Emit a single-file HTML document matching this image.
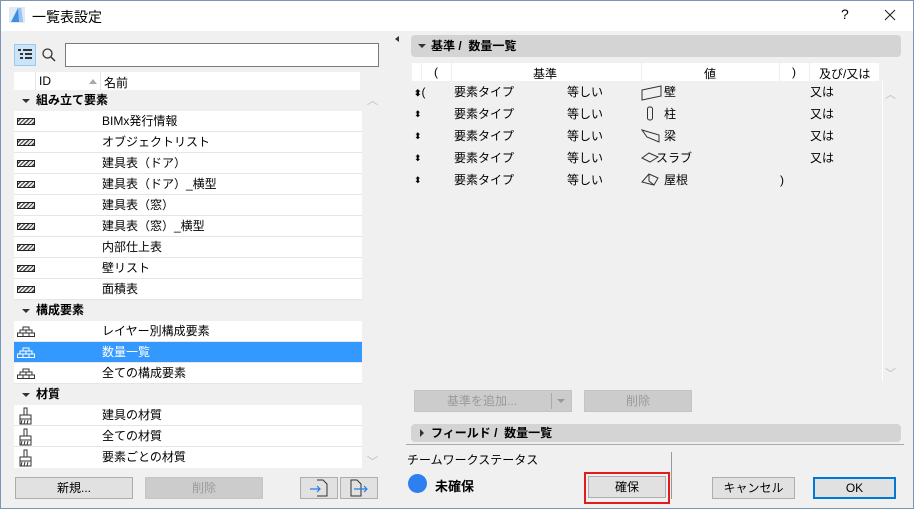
<!DOCTYPE html>
<html><head><meta charset="utf-8"><style>
*{box-sizing:border-box;margin:0;padding:0}
body{width:914px;height:509px;overflow:hidden;background:#f0f0f0;font-family:"Liberation Sans","Noto Sans CJK JP",sans-serif;font-size:12px;color:#000;position:relative}
.a{position:absolute}
.win{left:0;top:0;width:914px;height:509px;border:1px solid #7a96b4}
.title{left:1px;top:1px;width:912px;height:30px;background:#fff}
.row{position:absolute;left:14px;width:348px;height:21px;line-height:21px;background:#fff;border-bottom:1px solid #e6e6e6}
.grp{background:#f0f0f0;font-weight:bold;border-bottom:none}
.grp span{position:absolute;left:22px}
.grp i{position:absolute;left:8px;top:9px;border:4px solid transparent;border-top:4px solid #333;border-bottom:0}
.row .n{position:absolute;left:88px}
.hatch{position:absolute;left:3px;top:7px;width:18px;height:7px;border:1px solid #222;background:repeating-linear-gradient(135deg,#eee 0 1px,#444 1px 2.2px,#eee 2.2px 3px)}
.sel{background:#3399ff;color:#fff}
.btn{position:absolute;height:22px;border:1px solid #adadad;background:#e1e1e1;text-align:center;line-height:20px}
.dis{color:#9a9a9a;background:#cccccc;border-color:#c4c4c4}
.bar{position:absolute;left:411px;width:490px;background:#d4d4d4;border-radius:4px;font-weight:bold}
.tr{position:absolute;left:412px;height:22px;line-height:22px;width:470px}
.tr span{position:absolute}
.ar{font-size:9px}
</style></head><body>
<div class="a win"></div>
<div class="a title"></div>
<svg class="a" style="left:9px;top:7px" width="16" height="16"><rect width="16" height="16" fill="#dfe9f7"/><path d="M2 15 L9 1 L12 1 L14 15 Z" fill="#3d8de0"/><path d="M9 1 L12 1 L14 15 L10 15Z" fill="#9cc6f2"/></svg>
<div class="a" style="left:32px;top:7px;font-size:14px">一覧表設定</div>
<div class="a" style="left:841px;top:6px;font-size:14px">?</div>
<svg class="a" style="left:884px;top:9px" width="12" height="12"><path d="M1 1L11 11M11 1L1 11" stroke="#222" stroke-width="1.1"/></svg>

<div class="a" style="left:14px;top:44px;width:22px;height:22px;background:#cce4f7;border:1px solid #99c9ef"></div>
<svg class="a" style="left:17px;top:48px" width="16" height="14"><g fill="#333"><rect x="1" y="1" width="3" height="2"/><rect x="6" y="1" width="9" height="2"/><rect x="3" y="5" width="3" height="2"/><rect x="8" y="5" width="7" height="2"/><rect x="3" y="9" width="3" height="2"/><rect x="8" y="9" width="7" height="2"/></g></svg>
<svg class="a" style="left:41px;top:47px" width="16" height="16"><circle cx="6.5" cy="6.5" r="4.5" fill="none" stroke="#333" stroke-width="1.3"/><path d="M10 10 L14 14" stroke="#333" stroke-width="1.5"/></svg>
<div class="a" style="left:65px;top:43px;width:314px;height:24px;background:#fff;border:1px solid #7a7a7a"></div>

<div class="a" style="left:14px;top:72px;width:346px;height:18px;background:#fff"></div>
<div class="a" style="left:35px;top:72px;width:1px;height:18px;background:#e5e5e5"></div>
<div class="a" style="left:100px;top:72px;width:1px;height:18px;background:#e5e5e5"></div>
<div class="a" style="left:39px;top:74px">ID</div>
<div class="a" style="left:89px;top:79px;border:4px solid transparent;border-bottom:5px solid #aaa;border-top:0"></div>
<div class="a" style="left:104px;top:74px">名前</div>

<div class="row grp" style="top:90px"><i></i><span>組み立て要素</span></div>
<div class="row" style="top:111px"><b class="hatch"></b><span class="n">BIMx発行情報</span></div>
<div class="row" style="top:132px"><b class="hatch"></b><span class="n">オブジェクトリスト</span></div>
<div class="row" style="top:153px"><b class="hatch"></b><span class="n">建具表（ドア）</span></div>
<div class="row" style="top:174px"><b class="hatch"></b><span class="n">建具表（ドア）_横型</span></div>
<div class="row" style="top:195px"><b class="hatch"></b><span class="n">建具表（窓）</span></div>
<div class="row" style="top:216px"><b class="hatch"></b><span class="n">建具表（窓）_横型</span></div>
<div class="row" style="top:237px"><b class="hatch"></b><span class="n">内部仕上表</span></div>
<div class="row" style="top:258px"><b class="hatch"></b><span class="n">壁リスト</span></div>
<div class="row" style="top:279px"><b class="hatch"></b><span class="n">面積表</span></div>
<div class="row grp" style="top:300px"><i></i><span>構成要素</span></div>
<div class="row" style="top:321px"><svg class="a" style="left:3px;top:5px" width="18" height="11"><path d="M6 1h6v3H6zM3 4h12v3H3zM0.5 7h17v3.5H0.5zM9 4v3M6 7v3.5M12 7v3.5" fill="none" stroke="#333"/></svg><span class="n">レイヤー別構成要素</span></div>
<div class="row sel" style="top:342px"><svg class="a" style="left:3px;top:5px" width="18" height="11"><path d="M6 1h6v3H6zM3 4h12v3H3zM0.5 7h17v3.5H0.5zM9 4v3M6 7v3.5M12 7v3.5" fill="none" stroke="#fff"/></svg><span class="n">数量一覧</span></div>
<div class="row" style="top:363px"><svg class="a" style="left:3px;top:5px" width="18" height="11"><path d="M6 1h6v3H6zM3 4h12v3H3zM0.5 7h17v3.5H0.5zM9 4v3M6 7v3.5M12 7v3.5" fill="none" stroke="#333"/></svg><span class="n">全ての構成要素</span></div>
<div class="row grp" style="top:384px"><i></i><span>材質</span></div>
<div class="row" style="top:405px"><svg class="a" style="left:4px;top:2px" width="16" height="18"><path d="M6 1h3v7H6zM2 8h11v4H2zM2 12v5h11v-5" fill="none" stroke="#333"/><path d="M3 17l1-4M6 17l1-4M9 17l1-4" stroke="#333"/></svg><span class="n">建具の材質</span></div>
<div class="row" style="top:426px"><svg class="a" style="left:4px;top:2px" width="16" height="18"><path d="M6 1h3v7H6zM2 8h11v4H2zM2 12v5h11v-5" fill="none" stroke="#333"/><path d="M3 17l1-4M6 17l1-4M9 17l1-4" stroke="#333"/></svg><span class="n">全ての材質</span></div>
<div class="row" style="top:447px;border:none"><svg class="a" style="left:4px;top:2px" width="16" height="18"><path d="M6 1h3v7H6zM2 8h11v4H2zM2 12v5h11v-5" fill="none" stroke="#333"/><path d="M3 17l1-4M6 17l1-4M9 17l1-4" stroke="#333"/></svg><span class="n">要素ごとの材質</span></div>
<div class="a" style="left:367px;top:92px;color:#bbb;font-size:11px">︿</div>
<div class="a" style="left:367px;top:453px;color:#bbb;font-size:11px">﹀</div>

<div class="btn" style="left:15px;top:477px;width:118px">新規...</div>
<div class="btn dis" style="left:145px;top:477px;width:118px">削除</div>
<div class="btn" style="left:300px;top:477px;width:38px"><svg width="22" height="18" style="margin-top:1px"><path d="M9 1h6l4 4v12H9" fill="none" stroke="#333"/><path d="M2 10h10M9 7l3 3-3 3" fill="none" stroke="#2a7ae2" stroke-width="1.2"/></svg></div>
<div class="btn" style="left:340px;top:477px;width:38px"><svg width="22" height="18" style="margin-top:1px"><path d="M3 17V1h6l4 4v12z" fill="none" stroke="#333"/><path d="M6 10h13M16 7l3 3-3 3" fill="none" stroke="#2a7ae2" stroke-width="1.2"/></svg></div>

<div class="a" style="left:392px;top:36px;border:3px solid transparent;border-right:4px solid #333"></div>

<div class="bar" style="top:35px;height:22px;line-height:22px"><span class="a" style="left:7px;top:9px;border:4px solid transparent;border-top:4px solid #333;border-bottom:0"></span><span style="position:absolute;left:20px">基準 /&nbsp; 数量一覧</span></div>
<div class="a" style="left:412px;top:63px;width:467px;height:18px;background:#fff"></div>
<div class="a" style="left:421px;top:63px;width:1px;height:18px;background:#eee"></div>
<div class="a" style="left:451px;top:63px;width:1px;height:18px;background:#eee"></div>
<div class="a" style="left:641px;top:63px;width:1px;height:18px;background:#eee"></div>
<div class="a" style="left:779px;top:63px;width:1px;height:18px;background:#eee"></div>
<div class="a" style="left:809px;top:63px;width:1px;height:18px;background:#eee"></div>
<div class="a" style="left:434px;top:65px">(</div>
<div class="a" style="left:533px;top:65px">基準</div>
<div class="a" style="left:704px;top:65px">値</div>
<div class="a" style="left:792px;top:65px">)</div>
<div class="a" style="left:819px;top:65px">及び/又は</div>
<div class="a" style="left:882px;top:81px;width:1px;height:300px;background:#fff"></div>
<div class="a" style="left:885px;top:86px;color:#bbb;font-size:11px">︿</div>
<div class="a" style="left:885px;top:365px;color:#bbb;font-size:11px">﹀</div>

<div class="tr" style="top:81px"><span style="left:2px"><b class="ar">⬍</b>(</span><span style="left:42px">要素タイプ</span><span style="left:155px">等しい</span><svg style="position:absolute;left:229px;top:4px" width="22" height="16"><path d="M1 5L20 1V11L1 15Z" fill="none" stroke="#333"/></svg><span style="left:252px">壁</span><span style="left:398px">又は</span></div>
<div class="tr" style="top:103px"><span style="left:2px" class="ar">⬍</span><span style="left:42px">要素タイプ</span><span style="left:155px">等しい</span><svg style="position:absolute;left:234px;top:3px" width="10" height="16"><rect x="1.5" y="1" width="5" height="13" rx="2" fill="none" stroke="#333"/></svg><span style="left:252px">柱</span><span style="left:398px">又は</span></div>
<div class="tr" style="top:125px"><span style="left:2px" class="ar">⬍</span><span style="left:42px">要素タイプ</span><span style="left:155px">等しい</span><svg style="position:absolute;left:229px;top:4px" width="22" height="14"><path d="M1 1L18 6V13L6 8Z" fill="none" stroke="#333"/></svg><span style="left:252px">梁</span><span style="left:398px">又は</span></div>
<div class="tr" style="top:147px"><span style="left:2px" class="ar">⬍</span><span style="left:42px">要素タイプ</span><span style="left:155px">等しい</span><svg style="position:absolute;left:229px;top:5px" width="22" height="12"><path d="M1 6L8 1L17 5L9 10Z" fill="none" stroke="#333"/></svg><span style="left:244px">スラブ</span><span style="left:398px">又は</span></div>
<div class="tr" style="top:169px"><span style="left:2px" class="ar">⬍</span><span style="left:42px">要素タイプ</span><span style="left:155px">等しい</span><svg style="position:absolute;left:229px;top:4px" width="22" height="14"><path d="M1 9L8 1L17 5L13 12ZM8 1L8 8L13 12" fill="none" stroke="#333"/></svg><span style="left:252px">屋根</span><span style="left:368px">)</span></div>

<div class="btn dis" style="left:414px;top:390px;width:158px"><span style="margin-right:22px">基準を追加...</span></div>
<div class="a" style="left:551px;top:393px;width:1px;height:16px;background:#aaa"></div>
<div class="a" style="left:557px;top:399px;border:4px solid transparent;border-top:4px solid #999;border-bottom:0"></div>
<div class="btn dis" style="left:584px;top:390px;width:108px">削除</div>

<div class="bar" style="top:424px;height:18px;line-height:18px"><span class="a" style="left:9px;top:5px;border:4px solid transparent;border-left:4px solid #333;border-right:0"></span><span style="position:absolute;left:20px">フィールド /&nbsp; 数量一覧</span></div>
<div class="a" style="left:406px;top:444px;width:498px;height:1px;background:#aaa"></div>
<div class="a" style="left:407px;top:451px">チームワークステータス</div>
<div class="a" style="left:408px;top:474px;width:19px;height:19px;border-radius:50%;background:#2e7fef"></div>
<div class="a" style="left:435px;top:476px;font-weight:bold;font-size:13px">未確保</div>
<div class="a" style="left:671px;top:452px;width:1px;height:47px;background:#999"></div>
<div class="a" style="left:584px;top:472px;width:86px;height:32px;border:2px solid #e41b1b"></div>
<div class="btn" style="left:588px;top:476px;width:78px">確保</div>
<div class="btn" style="left:712px;top:477px;width:83px">キャンセル</div>
<div class="btn" style="left:813px;top:477px;width:83px;border:2px solid #0078d7;line-height:18px">OK</div>
</body></html>
